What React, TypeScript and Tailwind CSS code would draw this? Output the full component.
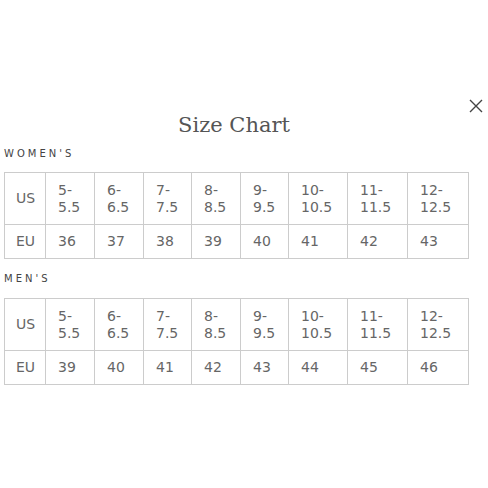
import React from "react";

const widths = [41, 49, 49, 48, 49, 48, 59, 60, 61];
const usSizes = [
  ["5-", "5.5"],
  ["6-", "6.5"],
  ["7-", "7.5"],
  ["8-", "8.5"],
  ["9-", "9.5"],
  ["10-", "10.5"],
  ["11-", "11.5"],
  ["12-", "12.5"],
];

function SizeTable({ eu }: { eu: string[] }) {
  return (
    <table className="table-fixed border-collapse w-[464px] text-[14px] leading-[17px] text-[#666666]" style={{ fontFamily: '"DejaVu Sans", sans-serif' }}>
      <colgroup>
        {widths.map((w, i) => (
          <col key={i} style={{ width: w }} />
        ))}
      </colgroup>
      <tbody>
        <tr className="h-[52px]">
          <td className="border border-[#cccccc] pl-[11px] align-middle">US</td>
          {usSizes.map((s, i) => (
            <td key={i} className="border border-[#cccccc] pl-[12px] align-middle">
              {s[0]}
              <br />
              {s[1]}
            </td>
          ))}
        </tr>
        <tr className="h-[34px]">
          <td className="border border-[#cccccc] pl-[11px] align-middle">EU</td>
          {eu.map((s, i) => (
            <td key={i} className="border border-[#cccccc] pl-[12px] align-middle">
              {s}
            </td>
          ))}
        </tr>
      </tbody>
    </table>
  );
}

export default function App() {
  return (
    <div className="relative w-[488px] h-[488px] bg-white overflow-hidden">
      <button className="absolute left-[469px] top-[99px] w-[14px] h-[14px]" aria-label="Close">
        <svg width="14" height="14" viewBox="0 0 14 14" fill="none" stroke="#444" strokeWidth="1.4">
          <path d="M1 1 L13 13 M13 1 L1 13" />
        </svg>
      </button>
      <div className="flex flex-col pl-[4px] pt-[113px]">
        <h2
          className="text-center text-[21px] leading-[24px] text-[#555] w-[460px]"
          style={{ fontFamily: '"DejaVu Serif", serif' }}
        >
          Size Chart
        </h2>
        <div
          className="mt-[11px] text-[10px] leading-[12px] tracking-[3px] text-[#444]"
          style={{ fontFamily: '"DejaVu Sans", sans-serif' }}
        >
          WOMEN'S
        </div>
        <div className="mt-[12px]">
          <SizeTable eu={["36", "37", "38", "39", "40", "41", "42", "43"]} />
        </div>
        <div
          className="mt-[14px] text-[10px] leading-[12px] tracking-[3px] text-[#444]"
          style={{ fontFamily: '"DejaVu Sans", sans-serif' }}
        >
          MEN'S
        </div>
        <div className="mt-[13px]">
          <SizeTable eu={["39", "40", "41", "42", "43", "44", "45", "46"]} />
        </div>
      </div>
    </div>
  );
}
